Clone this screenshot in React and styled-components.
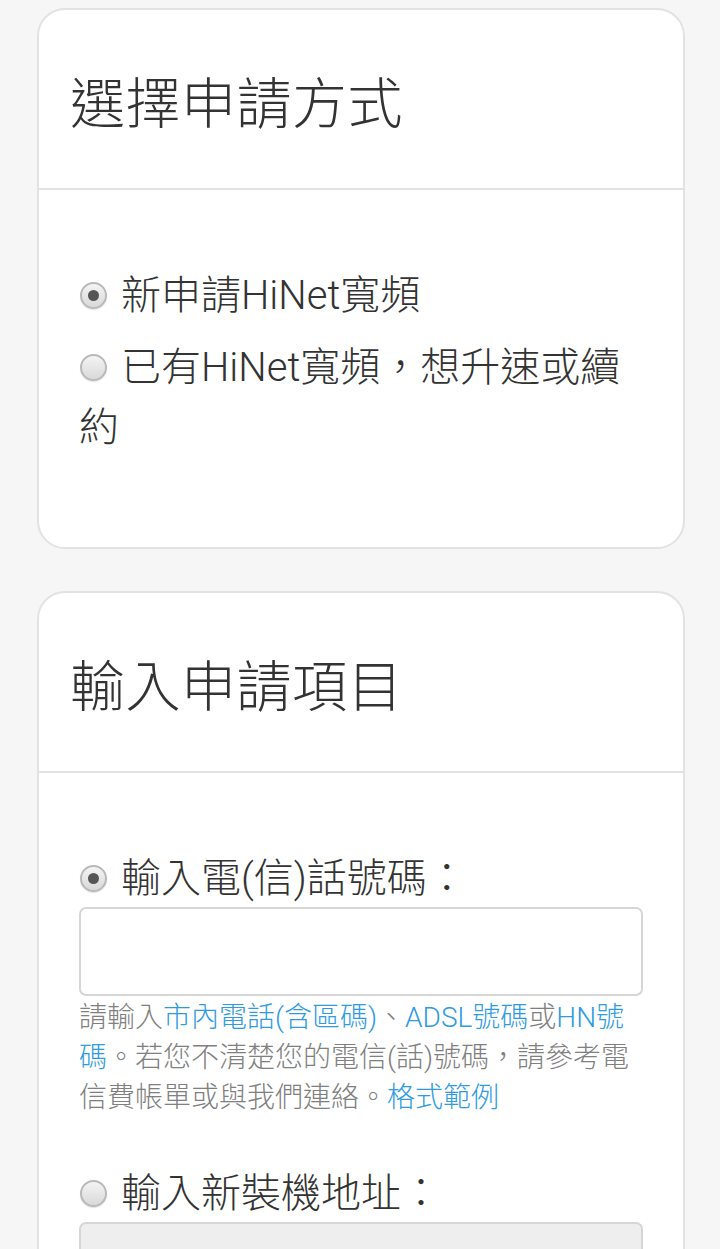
import React from "react";
import styled, { createGlobalStyle } from "styled-components";

const GlobalStyle = createGlobalStyle`
  body {
    margin: 0;
    background: #f6f6f6;
    font-family: Roboto, "Noto Sans CJK TC", sans-serif;
    font-weight: 300;
    color: #333;
  }
`;

const Page = styled.div`
  padding: 8px 35px 40px 37px;
  display: flex;
  flex-direction: column;
  gap: 42px;
`;

const Card = styled.section`
  background: #fff;
  border: 2px solid #e2e2e2;
  border-radius: 28px;
  overflow: hidden;
`;

const CardHeader = styled.div`
  height: 178px;
  display: flex;
  align-items: center;
  padding: 0 31px;
  border-bottom: 2px solid #e2e2e2;
`;

const Title = styled.h2`
  margin: 0;
  font-size: 55px;
  font-weight: 300;
  color: #333;
  letter-spacing: 0.5px;
`;

const CardBody = styled.div`
  padding: ${(p) => p.$top}px 40px ${(p) => p.$bottom}px;
`;

const Option = styled.div`
  font-size: 40px;
  line-height: 60px;
  color: #333;
  margin-top: ${(p) => p.$gap || 0}px;
`;

const Radio = styled.span`
  display: inline-block;
  box-sizing: border-box;
  width: 27px;
  height: 27px;
  border-radius: 50%;
  border: 2px solid #b9b9b9;
  background: linear-gradient(#f4f4f4, #d9d9d9);
  box-shadow: 0 1px 1px rgba(0, 0, 0, 0.12);
  vertical-align: middle;
  margin: -6px 14px 0 1px;
  position: relative;

  &::after {
    content: "";
    display: ${(p) => (p.$checked ? "block" : "none")};
    position: absolute;
    left: 50%;
    top: 50%;
    width: 11px;
    height: 11px;
    margin: -5.5px 0 0 -5.5px;
    border-radius: 50%;
    background: #555;
  }
`;

const TextInput = styled.div`
  box-sizing: border-box;
  height: ${(p) => p.$height}px;
  margin-top: -2px;
  border: 2px solid #d6d6d6;
  border-radius: 7px;
  background: ${(p) => (p.$disabled ? "#eeeeee" : "#fff")};
`;

const Help = styled.p`
  margin: 2px 0 0;
  font-size: 28px;
  line-height: 40px;
  color: #808080;
`;

const Link = styled.a`
  color: #2f9be0;
  text-decoration: none;
`;

export default function App() {
  return (
    <>
      <GlobalStyle />
      <Page>
        <Card>
          <CardHeader>
            <Title>選擇申請方式</Title>
          </CardHeader>
          <CardBody $top={76} $bottom={89}>
            <Option>
              <Radio $checked />新申請HiNet寬頻
            </Option>
            <Option $gap={12}>
              <Radio />已有HiNet寬頻，想升速或續約
            </Option>
          </CardBody>
        </Card>
        <Card>
          <CardHeader>
            <Title>輸入申請項目</Title>
          </CardHeader>
          <CardBody $top={76} $bottom={40}>
            <Option>
              <Radio $checked />輸入電(信)話號碼：
            </Option>
            <TextInput $height={89} />
            <Help>
              請輸入<Link href="#">市內電話(含區碼)</Link>、
              <Link href="#">ADSL號碼</Link>或<Link href="#">HN號碼</Link>
              。若您不清楚您的電信(話)號碼，請參考電信費帳單或與我們連絡。
              <Link href="#">格式範例</Link>
            </Help>
            <Option $gap={46}>
              <Radio />輸入新裝機地址：
            </Option>
            <TextInput $height={89} $disabled />
          </CardBody>
        </Card>
      </Page>
    </>
  );
}
